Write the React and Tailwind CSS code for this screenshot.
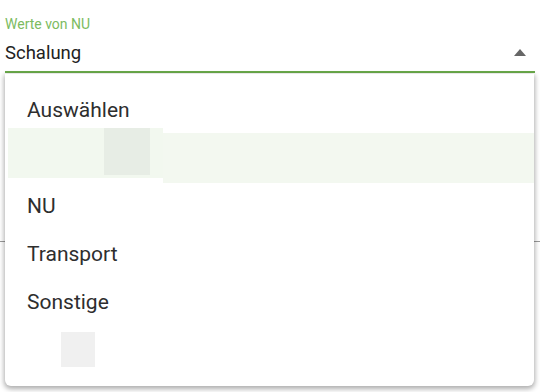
const OPTIONS = ["Auswählen", null, "NU", "Transport", "Sonstige", ""];

function MenuItem({ label }) {
  if (label === null) {
    // selected row, highlighted (text not rendered)
    return (
      <div className="flex h-12 items-start">
        <div className="-mt-[5px] ml-[3px] h-[50px] w-[155px] bg-[#f2f8ef] pl-[96px]">
          <div className="h-[47px] w-[46px] bg-[#e7ede5]" />
        </div>
        <div className="h-[50px] flex-1 bg-[#f3f8f0]" />
      </div>
    );
  }
  if (label === "") {
    return (
      <div className="flex h-12 items-center pl-[56px]">
        <div className="h-[35px] w-[34px] bg-[#f0f0f0]" />
      </div>
    );
  }
  return (
    <div className="flex h-12 items-center pl-[22px] pt-[3px] text-[21px] text-[#2e2e2e]">
      {label}
    </div>
  );
}

export default function App() {
  return (
    <div className="relative h-[392px] w-[540px] overflow-hidden bg-white font-['Roboto',sans-serif]">
      <div className="px-[5px] pt-[16px]">
        <div className="text-[14px] leading-[17px] text-[#7cbb5f]">Werte von NU</div>
        <div className="flex h-[38px] items-center justify-between pr-[9px] pt-[3px]">
          <span className="text-[18.5px] text-[#222]">Schalung</span>
          <svg width="12" height="7" viewBox="0 0 12 7" className="-mt-[3px]">
            <path d="M0 7 L6 0 L12 7 Z" fill="#666" />
          </svg>
        </div>
        <div className="h-[2px] bg-[#6aaa4a]" />
      </div>
      <div className="mt-[168px] h-px bg-[#9a9a9a]" />

      <div className="absolute left-[5px] top-[74px] w-[529px] rounded-b-[6px] bg-white pb-[13px] pt-[11px] shadow-[0_2px_5px_1px_rgba(0,0,0,0.32)]">
        {OPTIONS.map((o, i) => (
          <MenuItem key={i} label={o} />
        ))}
      </div>
    </div>
  );
}
